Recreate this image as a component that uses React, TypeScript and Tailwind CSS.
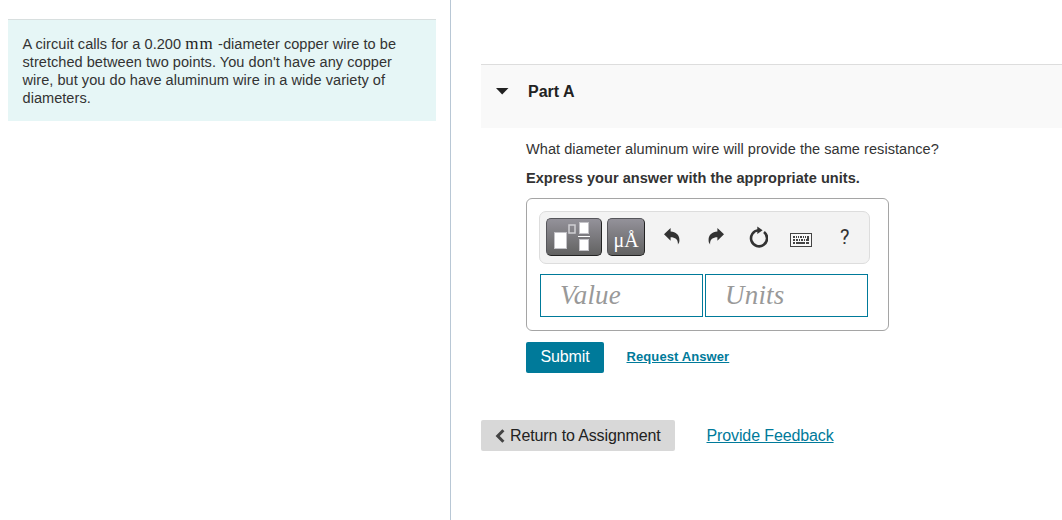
import React from "react";

function TemplatesIcon() {
  return (
    <svg width="54" height="36" viewBox="0 0 54 36" shapeRendering="crispEdges">
      <g fill="#fff" stroke="#c4c3c8">
        <rect x="7.5" y="13.5" width="12" height="16" />
        <rect x="32.5" y="3.5" width="9" height="11" />
        <rect x="32.5" y="20.5" width="9" height="11" />
      </g>
      <rect x="22" y="6" width="6" height="8" fill="none" stroke="#d0cfd3" strokeWidth="1.5" shapeRendering="auto" />
      <rect x="31" y="17" width="12" height="1" fill="#fff" />
    </svg>
  );
}

function UndoIcon() {
  return (
    <svg width="16" height="18" viewBox="0 0 16 18" fill="#333">
      <path d="M0 6.3 6.6 0v3.6C12.6 3.8 16.4 8 15.2 14.2L13.9 16.4C14.2 11.5 11.4 9.2 6.6 9.2v3.5Z" />
    </svg>
  );
}

function ResetIcon() {
  return (
    <svg width="20" height="22" viewBox="0 0 20 22">
      <path d="M10.5 4.3A8 8 0 1 0 16 6" fill="none" stroke="#333" strokeWidth="2.6" />
      <path d="M9.3 0.6 14.6 4.3 9.3 8Z" fill="#333" />
    </svg>
  );
}

function KeyboardIcon() {
  return (
    <svg width="22" height="14" viewBox="0 0 22 14" shapeRendering="crispEdges">
      <rect x="0.5" y="0.5" width="21" height="13" rx="1" fill="#f8f8f8" stroke="#444" />
      <path d="M3 4h2M6 4h1M8 4h1M10 4h2M13 4h1M15 4h1M3 7h2M6 7h2M9 7h1M11 7h2M14 7h1" stroke="#444" strokeWidth="2" />
      <path d="M3 10h2M6 10h9M16 10h3" stroke="#444" strokeWidth="2" />
      <path d="M17 3h2v5h-3v-2h1z" fill="#444" />
    </svg>
  );
}

const toolButton =
  "flex h-[38px] items-center justify-center rounded-[5px] border border-r-[#222] border-b-[#222] border-t-[#55555a] border-l-[#55555a] bg-linear-to-b from-[#94929a] to-[#626262]";
const answerInput =
  "flex h-[43px] w-[163px] items-center border border-[#007a9a] bg-white pb-[1px] font-['Liberation_Serif',serif] text-[27px] tracking-[0.2px] italic text-[#999]";

function ProblemPanel() {
  return (
    <aside className="h-full w-[451px] shrink-0 border-r border-[#b8c7d5] pt-[19px] pl-2">
      <div className="h-[102px] w-[428px] border-t border-[#d8dfdf] bg-[#e6f6f6] pt-[15px] pl-[14.5px] text-[14.56px] leading-[18px] tracking-[0.035px] whitespace-nowrap text-[#333]">
        <p className="h-[18px]">
          A circuit calls for a 0.200{" "}
          <span className="inline-block w-[28.8px] font-['Liberation_Serif',serif] text-[17px] leading-none tracking-[1px] text-[#222]">mm</span>
          {" "}-diameter copper wire to be
        </p>
        <p>stretched between two points. You don't have any copper</p>
        <p>wire, but you do have aluminum wire in a wide variety of</p>
        <p>diameters.</p>
      </div>
    </aside>
  );
}

function AnswerEditor() {
  return (
    <div className="mt-[11px] h-[133px] w-[363px] rounded-[6px] border border-[#a5a5a5] px-3 pt-3">
      <div className="flex h-[53px] w-[331px] items-center rounded-[7px] border border-[#ddd] bg-[#f3f3f3] pb-[1px] pl-[6px]">
        <button className={`${toolButton} w-[56px]`}><TemplatesIcon /></button>
        <button className={`${toolButton} ml-[5px] w-[38px] pt-[3px] font-['Liberation_Serif',serif] text-[20px] leading-none text-white`}>
          <span className="scale-y-110">μÅ</span>
        </button>
        <button className="ml-[19px]"><UndoIcon /></button>
        <button className="ml-[28px] -scale-x-100"><UndoIcon /></button>
        <button className="ml-[24px]"><ResetIcon /></button>
        <button className="mt-[5px] ml-[22px]"><KeyboardIcon /></button>
        <button className="ml-[28px] font-[Roboto,sans-serif] text-[20px] leading-none text-[#333]">?</button>
      </div>
      <div className="mt-[10px] ml-px flex gap-[2px]">
        <div className={`${answerInput} pl-[19px]`}>Value</div>
        <div className={`${answerInput} pl-[19px]`}>Units</div>
      </div>
    </div>
  );
}

export default function App() {
  return (
    <div className="flex h-[520px] w-[1062px] overflow-hidden bg-white font-['Liberation_Sans',Arial,sans-serif] text-[#333]">
      <ProblemPanel />
      <main className="min-w-0 flex-1 pt-16 pl-[30px]">
        <header className="flex h-[64px] border-t border-[#ddd] bg-[#f9f9f9] pt-[17px] pl-[15px]">
          <svg className="mt-[6px]" width="13" height="7" viewBox="0 0 13 7"><path d="M0 0h12.5L6.2 6.5Z" fill="#222" /></svg>
          <h2 className="ml-[19px] text-[16px] leading-[20px] font-bold text-[#222]">Part A</h2>
        </header>
        <section className="pt-3 pl-[45px] text-[14.56px] leading-[18px] tracking-[0.035px] whitespace-nowrap">
          <p>What diameter aluminum wire will provide the same resistance?</p>
          <p className="mt-[11px] font-bold">Express your answer with the appropriate units.</p>
          <AnswerEditor />
          <div className="mt-[11px] flex items-center">
            <button className="h-[31px] w-[78px] rounded-[2px] bg-[#007a9a] pb-[2px] text-[16px] tracking-[-0.1px] text-white">Submit</button>
            <a className="ml-[22.5px] pb-[2px] text-[13px] font-bold tracking-[0.1px] text-[#007a9a] underline" href="#">Request Answer</a>
          </div>
        </section>
        <footer className="mt-[47px] flex items-center whitespace-nowrap">
          <button className="flex h-[31px] w-[194px] items-center rounded-[2px] bg-[#d8d8d8] pl-[14px] text-[16px] tracking-[-0.12px] text-[#222]">
            <svg className="mr-[5px]" width="10" height="14" viewBox="0 0 10 14"><path d="M8.4 1.3 2.7 7l5.7 5.7" fill="none" stroke="#444" strokeWidth="3" /></svg>
            Return to Assignment
          </button>
          <a className="ml-[31.5px] text-[16px] tracking-[-0.12px] text-[#007a9a] underline" href="#">Provide Feedback</a>
        </footer>
      </main>
    </div>
  );
}
